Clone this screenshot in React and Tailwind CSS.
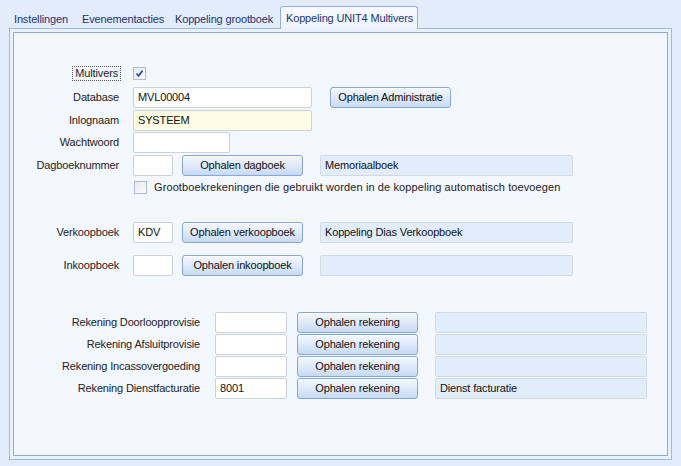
import React from 'react';

const btn =
  "h-full w-[121px] shrink-0 rounded-[3px] border border-[#86a8d8] bg-gradient-to-b from-[#f4f8fe] via-[#dfeafa] to-[#c6daf4] text-[11px] text-[#111] shadow-[inset_0_1px_0_#ffffff] flex items-center justify-center";
const input =
  "h-full shrink-0 rounded-[2px] border border-[#cbd2dc] pl-[4px] text-[11px] text-[#111] flex items-center";
const ro =
  "h-full shrink-0 rounded-[2px] border border-[#d3d9e1] bg-[#e2edfc] pl-[4px] text-[11px] text-[#111] flex items-center";

const Check = ({ checked }) => (
  <span className="w-[13px] h-[13px] shrink-0 border border-[#b0bccb] bg-gradient-to-br from-[#e4e8ee] to-[#fbfcfd] flex items-center justify-center">
    {checked && (
      <svg width="9" height="9" viewBox="0 0 9 9">
        <path d="M1.5 4.5 L3.5 6.8 L7.6 1.6" fill="none" stroke="#2a55b8" strokeWidth="1.8" />
      </svg>
    )}
  </span>
);

const Row = ({ label, gap = 'gap-[14px]', className = '', children }) => (
  <div className={`flex h-[21px] items-center ${className}`}>
    <div className="w-[105px] shrink-0 text-right text-[11px] text-[#222]">{label}</div>
    <div className={`flex h-full items-center ${gap} pl-[14px]`}>{children}</div>
  </div>
);

const RekRow = ({ label, value, desc, className = '' }) => (
  <div className={`flex h-[21px] items-center ${className}`}>
    <div className="w-[186px] shrink-0 text-right text-[11px] text-[#222]">{label}</div>
    <div className="flex h-full items-center pl-[15px]">
      <div className={`${input} bg-white w-[72px]`}>{value}</div>
      <div className={`${btn} ml-[10px]`}>Ophalen rekening</div>
      <div className={`${ro} w-[212px] ml-[17px]`}>{desc}</div>
    </div>
  </div>
);

export default function App() {
  return (
    <div className="w-[681px] h-[466px] bg-[#e2ecfb] font-['Liberation_Sans',Arial,sans-serif] tracking-[-0.15px] overflow-hidden">
      {/* tabs */}
      <div className="flex h-[28px] items-end pl-[9px]">
        <div className="w-[67px] h-[22px] pl-[5px] pt-[5px] text-[11px] text-[#1b3475]">Instellingen</div>
        <div className="w-[94px] h-[22px] pl-[6px] pt-[5px] text-[11px] text-[#1b3475]">Evenementacties</div>
        <div className="w-[110px] h-[22px] pl-[5px] pt-[5px] text-[11px] text-[#1b3475]">Koppeling grootboek</div>
        <div className="relative z-10 -mb-px w-[138px] h-[23px] rounded-t-[3px] border border-b-0 border-[#8fb0e2] bg-gradient-to-b from-[#f9fbff] to-[#edf3fd] pl-[5px] pt-[3px] text-[11px] text-[#1b3475]">
          Koppeling UNIT4 Multivers
        </div>
      </div>

      {/* page */}
      <div className="ml-[9px] w-[663px] h-[432px] border border-[#9bb8e6] bg-[#e9f1fd] p-[3px]">
        <div className="h-full border border-[#8aaadf] bg-[#f3f7fe] pt-[30px]">
          <div className="flex h-[21px] items-center">
            <div className="w-[107px] shrink-0 flex justify-end">
              <span className="border border-dotted border-[#555] px-[2px] text-[11px] leading-[13px] text-[#222]">Multivers</span>
            </div>
            <div className="pl-[12px]">
              <Check checked />
            </div>
          </div>

          <Row label="Database" className="mt-[3px]" gap="gap-[18px]">
            <div className={`${input} bg-white w-[179px]`}>MVL00004</div>
            <div className={btn}>Ophalen Administratie</div>
          </Row>
          <Row label="Inlognaam" className="mt-[2px]">
            <div className={`${input} w-[179px] bg-[#fefde3]`}>SYSTEEM</div>
          </Row>
          <Row label="Wachtwoord" className="mt-[1px]">
            <div className={`${input} bg-white w-[97px]`}></div>
          </Row>
          <Row label="Dagboeknummer" className="mt-[2px]" gap="gap-0">
            <div className={`${input} bg-white w-[40px]`}></div>
            <div className={`${btn} ml-[9px]`}>Ophalen dagboek</div>
            <div className={`${ro} w-[253px] ml-[17px]`}>Memoriaalboek</div>
          </Row>
          <div className="mt-[1px] flex h-[21px] items-center pl-[120px]">
            <Check />
            <span className="ml-[7px] text-[11px] tracking-[0.1px] text-[#222]">
              Grootboekrekeningen die gebruikt worden in de koppeling automatisch toevoegen
            </span>
          </div>

          <Row label="Verkoopboek" className="mt-[24px]" gap="gap-0">
            <div className={`${input} bg-white w-[40px]`}>KDV</div>
            <div className={`${btn} ml-[9px]`}>Ophalen verkoopboek</div>
            <div className={`${ro} w-[253px] ml-[17px]`}>Koppeling Dias Verkoopboek</div>
          </Row>
          <Row label="Inkoopboek" className="mt-[12px]" gap="gap-0">
            <div className={`${input} bg-white w-[40px]`}></div>
            <div className={`${btn} ml-[9px]`}>Ophalen inkoopboek</div>
            <div className={`${ro} w-[253px] ml-[17px]`}></div>
          </Row>

          <RekRow label="Rekening Doorloopprovisie" className="mt-[36px]" />
          <RekRow label="Rekening Afsluitprovisie" className="mt-[1px]" />
          <RekRow label="Rekening Incassovergoeding" className="mt-[1px]" />
          <RekRow label="Rekening Dienstfacturatie" className="mt-[1px]" value="8001" desc="Dienst facturatie" />
        </div>
      </div>
    </div>
  );
}
